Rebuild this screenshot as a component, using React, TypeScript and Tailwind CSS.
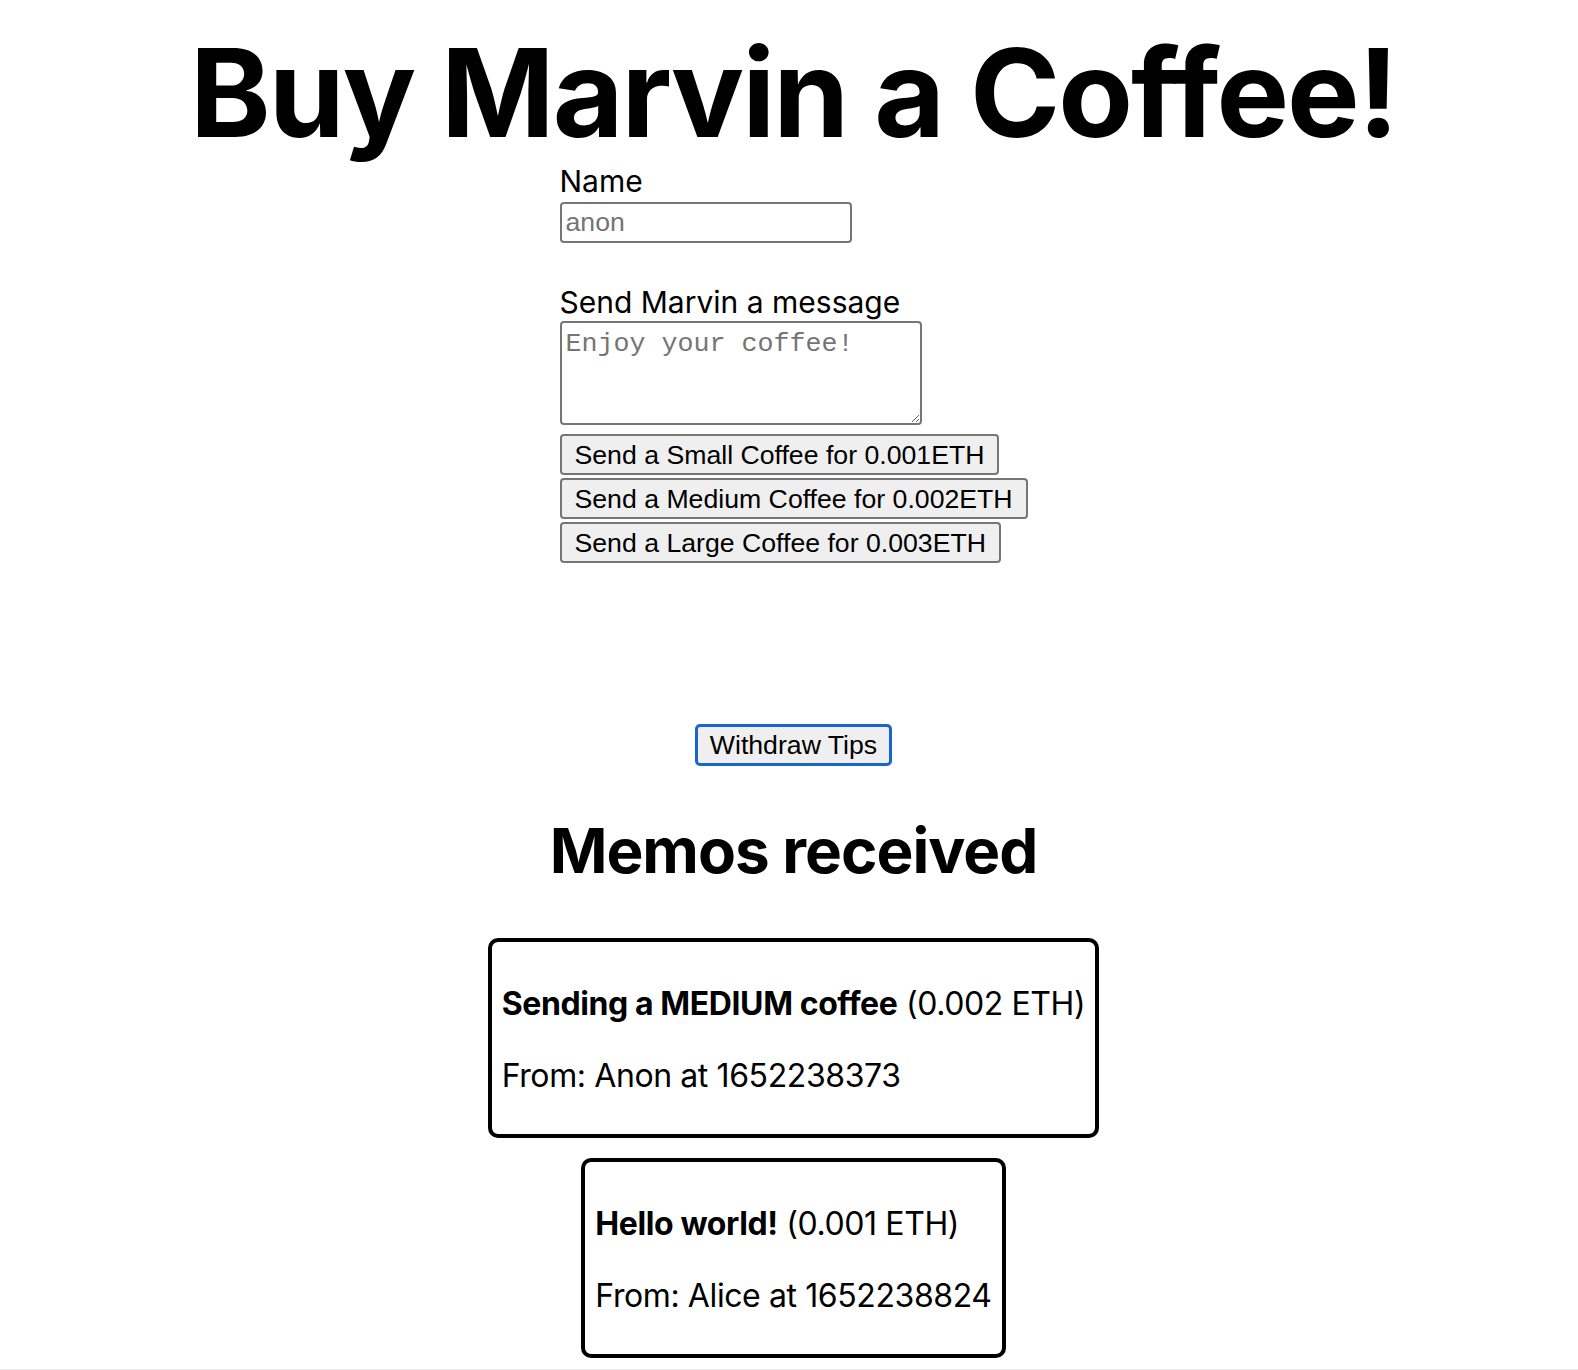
import React from "react";

const sans = { fontFamily: "Inter, 'Noto Sans', sans-serif" };

export default function App() {
  const memos = [
    { title: "Sending a MEDIUM coffee", amount: "0.002", from: "Anon", ts: "1652238373" },
    { title: "Hello world!", amount: "0.001", from: "Alice", ts: "1652238824" },
  ];
  return (
    <div className="min-h-[1370px] bg-white text-black font-['Inter','Noto_Sans',sans-serif]">
      <main className="flex flex-col items-center pl-[9px]">
        <h1 className="mt-[22px] text-[122px] leading-[141px] font-bold text-center whitespace-nowrap tracking-[-2px]">
          Buy Marvin a Coffee!
        </h1>

        <form className="w-[468px] flex flex-col items-start" onSubmit={(e) => e.preventDefault()}>
          <label className="text-[30px] leading-[36px]">Name</label>
          <input
            type="text"
            placeholder="anon"
            className="mt-[3px] w-[292px] h-[41px] border-2 border-[#767676] rounded-[4px] px-[4px] text-[26.67px] font-['Liberation_Sans',Arial,sans-serif] placeholder:text-[#757575] outline-none"
          />
          <label className="mt-[41px] text-[30px] leading-[36px]">Send Marvin a message</label>
          <textarea
            placeholder="Enjoy your coffee!"
            className="mt-[1px] w-[362px] h-[104px] border-2 border-[#767676] rounded-[4px] px-[4px] pt-[6px] pb-[4px] text-[26.67px] leading-[30px] font-['Liberation_Mono','Courier_New',monospace] placeholder:text-[#757575] outline-none"
          />
          <div className="mt-[9px] flex flex-col items-start gap-[3px]">
            {["Small", "Medium", "Large"].map((s, i) => (
              <button
                key={s}
                type="button"
                className="h-[41px] px-[13px] bg-[#efefef] border-2 border-[#767676] rounded-[4px] text-[26.67px] leading-[30px] font-['Liberation_Sans',Arial,sans-serif] whitespace-nowrap"
              >
                Send a {s} Coffee for 0.00{i + 1}ETH
              </button>
            ))}
          </div>
        </form>

        <button
          type="button"
          className="mt-[161px] h-[42px] px-[12px] bg-[#efefef] border-[3px] border-[#1766d0] rounded-[5px] text-[26.67px] leading-[30px] font-['Liberation_Sans',Arial,sans-serif] whitespace-nowrap"
        >
          Withdraw Tips
        </button>

        <h2 className="mt-[46px] text-[62px] leading-[77px] font-bold text-center tracking-[-1px]">Memos received</h2>

        <div className="mt-[49px] flex flex-col items-center gap-[20px]">
          {memos.map((m) => (
            <div key={m.ts} className="border-4 border-black rounded-[10px] px-[10px] pt-[10px] pb-[6px] text-[32px] leading-[40px] tracking-[-0.4px]" style={sans}>
              <p className="my-[32px] whitespace-nowrap">
                <strong className="font-bold">{m.title}</strong> ({m.amount} ETH)
              </p>
              <p className="my-[32px] whitespace-nowrap">
                From: {m.from} at {m.ts}
              </p>
            </div>
          ))}
        </div>
      </main>
      <footer className="mt-[11px] border-t border-[#eaeaea] h-[60px]" />
    </div>
  );
}
